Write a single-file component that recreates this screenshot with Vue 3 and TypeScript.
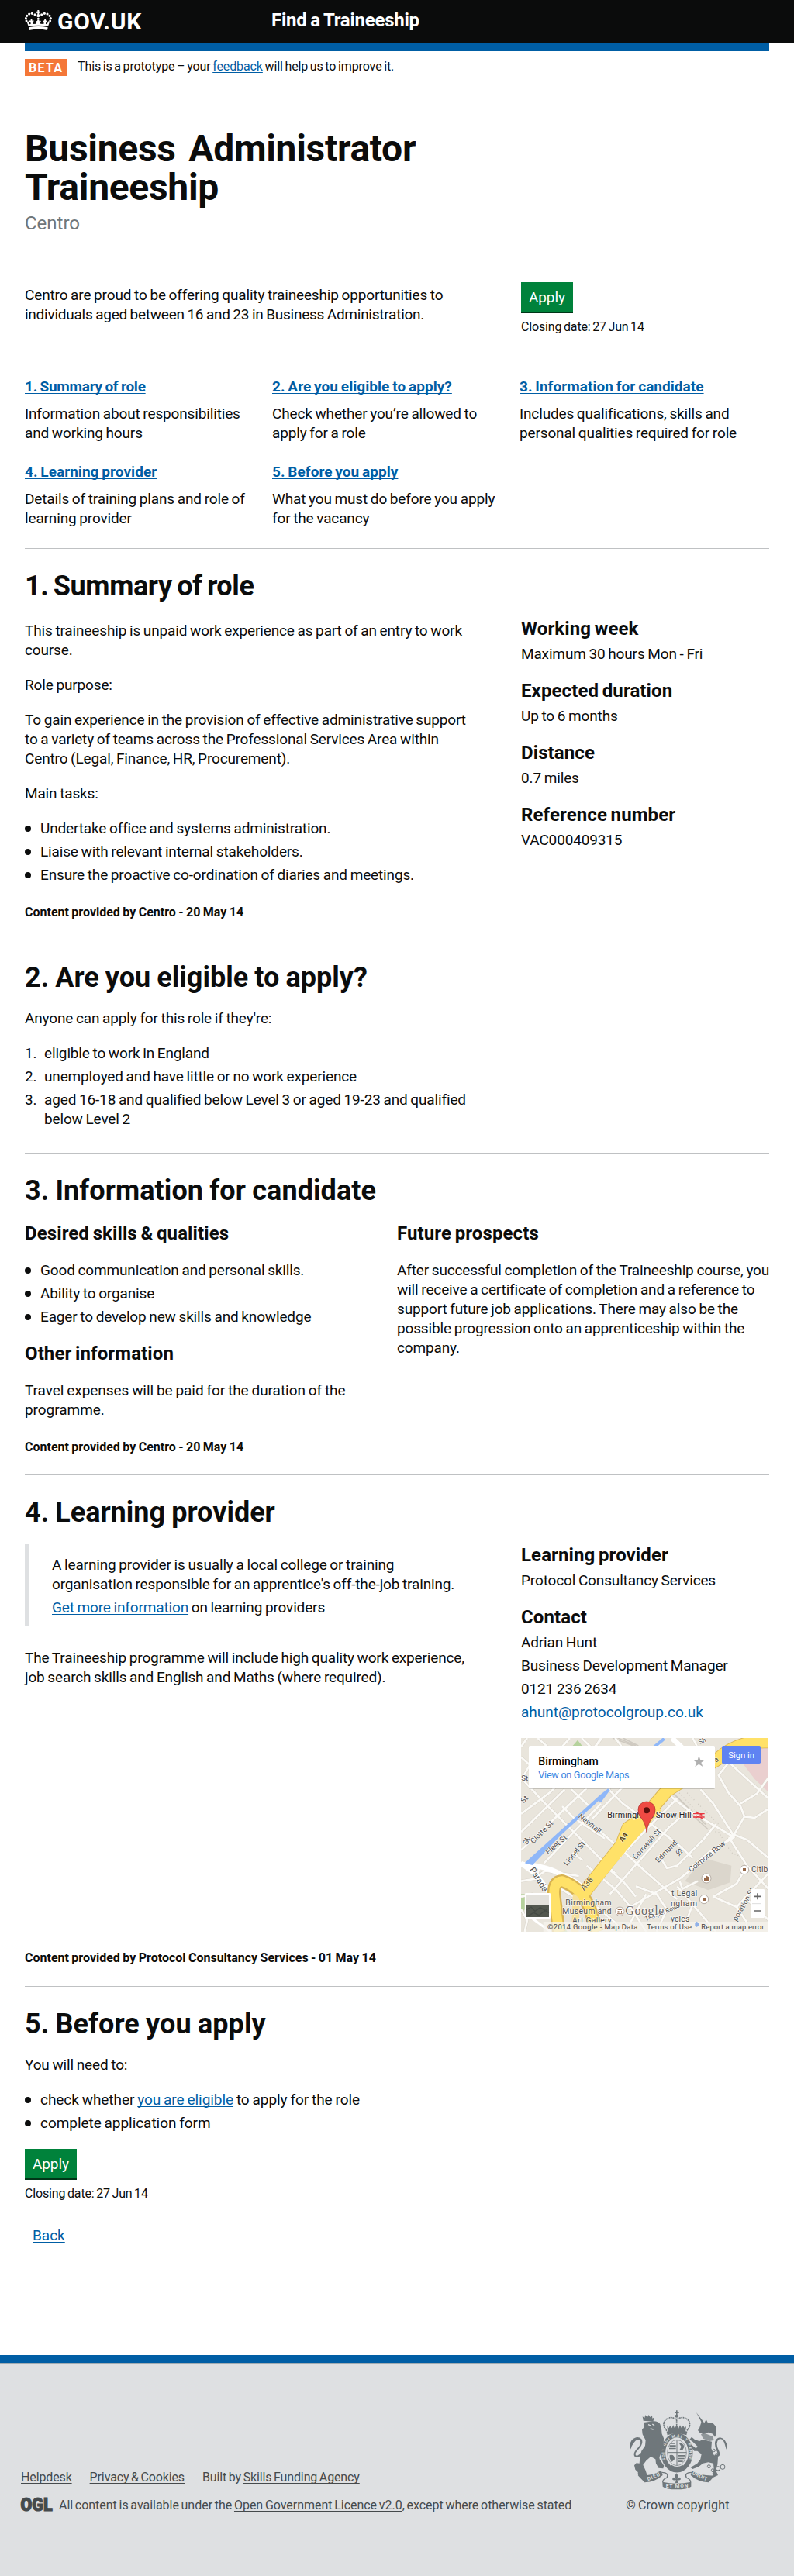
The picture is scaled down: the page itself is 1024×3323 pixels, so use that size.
<script setup lang="ts">
interface NavItem { id: string; title: string; lines: string[] }
interface Fact { term: string; details: string[] }

const nav: NavItem[] = [
  { id: 'summary', title: '1. Summary of role', lines: ['Information about responsibilities', 'and working hours'] },
  { id: 'eligible', title: '2. Are you eligible to apply?', lines: ['Check whether you’re allowed to', 'apply for a role'] },
  { id: 'candidate', title: '3. Information for candidate', lines: ['Includes qualifications, skills and', 'personal qualities required for role'] },
  { id: 'provider', title: '4. Learning provider', lines: ['Details of training plans and role of', 'learning provider'] },
  { id: 'before', title: '5. Before you apply', lines: ['What you must do before you apply', 'for the vacancy'] },
]

const facts: Fact[] = [
  { term: 'Working week', details: ['Maximum 30 hours Mon - Fri'] },
  { term: 'Expected duration', details: ['Up to 6 months'] },
  { term: 'Distance', details: ['0.7 miles'] },
  { term: 'Reference number', details: ['VAC000409315'] },
]

const tasks = [
  'Undertake office and systems administration.',
  'Liaise with relevant internal stakeholders.',
  'Ensure the proactive co-ordination of diaries and meetings.',
]

const skills = [
  'Good communication and personal skills.',
  'Ability to organise',
  'Eager to develop new skills and knowledge',
]

const streets = [
  'M36 330L150 245L330 60L350 36', 'M36 110L70 140L30 210', 'M36 400L205 235', 'M36 470L290 230',
  'M100 490L420 190', 'M125 520L345 290', 'M36 190L120 280L400 560', 'M60 36L36 70', 'M100 36L150 80',
  'M225 36L190 75', 'M270 36L310 75', 'M345 36L320 75', 'M110 525L95 580L36 590',
  'M100 570L130 550L260 570', 'M265 330L460 500L520 555L640 660', 'M195 300L240 345L360 425',
  'M360 220L430 290L500 340L640 445L700 500', 'M230 235L300 300', 'M600 250L690 320L860 420',
  'M430 225L310 350', 'M235 480L275 510', 'M330 590L540 370L640 270', 'M380 640L530 470L610 380L690 310',
  'M440 700L650 580L790 470L860 410', 'M570 490L600 540L640 530L740 430L790 370', 'M290 530L400 620L460 690L520 786',
  'M360 530L430 590L480 650', 'M480 610L560 640L600 700L560 786', 'M640 610L700 680L790 786',
  'M650 590L660 620L720 590', 'M690 540L760 480L860 420L850 400L780 290L730 235',
  'M860 410L900 340L885 300L840 250L800 180L840 130', 'M885 290L950 250L993 190', 'M840 130L993 270',
  'M900 340L940 345L993 310', 'M860 410L910 430L993 500', 'M840 420L910 530L993 620', 'M910 530L870 600L780 650',
  'M780 650L870 690L910 750L900 786', 'M870 690L993 560', 'M900 650L993 740', 'M36 650L80 640L100 690',
  'M36 700L60 740L50 786', 'M190 620L240 650L250 786', 'M330 690L400 750L430 786', 'M700 680L660 786',
  'M400 36L430 75', 'M590 36L560 75', 'M700 36L720 75', 'M520 640L470 730L440 786',
]
</script>

<template>
  <div class="page">
    <header class="top">
      <a class="logo" href="#">
        <svg class="crown" viewBox="22 25 105 78" fill="#fff">
          <path d="M71 25h6v5h5v6h-5v7h-6v-7h-5v-6h5z" />
          <circle cx="74" cy="47" r="6" /><circle cx="74" cy="58" r="4" />
          <circle cx="61" cy="42" r="4.6" /><circle cx="50" cy="38" r="4.8" /><circle cx="39" cy="40" r="4.8" />
          <circle cx="30" cy="47" r="4.8" /><circle cx="26" cy="57" r="4.8" /><circle cx="28" cy="67" r="4.4" />
          <circle cx="87" cy="42" r="4.6" /><circle cx="98" cy="38" r="4.8" /><circle cx="109" cy="40" r="4.8" />
          <circle cx="118" cy="47" r="4.8" /><circle cx="122" cy="57" r="4.8" /><circle cx="120" cy="67" r="4.4" />
          <path d="M30 70L36 88Q74 81 112 88L118 70L113 68L108 80L103 79L104 70L108 71V65L104 66L103 61H98L97 66L92 64V71L96 70L95 79L83 78L80 72L84 73V66L78 68L77 62H71L70 68L64 66V73L68 72L65 78L53 79L52 70L56 71V64L51 66L50 61H45L44 66L40 65V71L44 70L45 79L40 80L35 68z" />
          <path d="M37 92Q74 84 111 92L109 103Q74 96 39 103z" />
        </svg>
        <span class="logo-text">GOV.UK</span>
      </a>
      <span class="service">Find a Traineeship</span>
    </header>

    <div class="wrap">
      <div class="bar"></div>
      <div class="phase">
        <strong class="tag">BETA</strong>
        <span class="small">This is a prototype – your <a href="#">feedback</a> will help us to improve it.</span>
      </div>

      <h1>Business Administrator<br>Traineeship</h1>
      <p class="employer">Centro</p>

      <div class="split intro">
        <p>Centro are proud to be offering quality traineeship opportunities to<br><span class="tight">individuals aged between 16 and 23 in Business Administration.</span></p>
        <div class="cta">
          <a class="button" href="#">Apply</a>
          <p class="small">Closing date: 27 Jun 14</p>
        </div>
      </div>

      <nav class="contents">
        <div v-for="n in nav" :key="n.id">
          <a class="nav-title" :href="'#' + n.id">{{ n.title }}</a>
          <p>{{ n.lines[0] }}<br>{{ n.lines[1] }}</p>
        </div>
      </nav>

      <section id="summary">
        <h2>1. Summary of role</h2>
        <div class="split">
          <div class="copy lead">
            <p>This traineeship is unpaid work experience as part of an entry to work<br>course.</p>
            <p>Role purpose:</p>
            <p>To gain experience in the provision of effective administrative support<br>to a variety of teams across the Professional Services Area within<br>Centro (Legal, Finance, HR, Procurement).</p>
            <p>Main tasks:</p>
            <ul><li v-for="t in tasks" :key="t">{{ t }}</li></ul>
          </div>
          <div class="facts">
            <div v-for="f in facts" :key="f.term">
              <h3>{{ f.term }}</h3>
              <p v-for="d in f.details" :key="d">{{ d }}</p>
            </div>
          </div>
        </div>
        <p class="source">Content provided by Centro - 20 May 14</p>
      </section>

      <section id="eligible">
        <h2>2. Are you eligible to apply?</h2>
        <div class="copy">
          <p>Anyone can apply for this role if they're:</p>
          <ol>
            <li>eligible to work in England</li>
            <li>unemployed and have little or no work experience</li>
            <li>aged 16-18 and qualified below Level 3 or aged 19-23 and qualified<br>below Level 2</li>
          </ol>
        </div>
      </section>

      <section id="candidate">
        <h2>3. Information for candidate</h2>
        <div class="halves">
          <div class="copy">
            <h3>Desired skills &amp; qualities</h3>
            <ul><li v-for="s in skills" :key="s">{{ s }}</li></ul>
            <h3>Other information</h3>
            <p class="wide">Travel expenses will be paid for the duration of the<br>programme.</p>
          </div>
          <div class="copy">
            <h3>Future prospects</h3>
            <p>After successful completion of the Traineeship course, you<br>will receive a certificate of completion and a reference to<br>support future job applications. There may also be the<br>possible progression onto an apprenticeship within the<br>company.</p>
          </div>
        </div>
        <p class="source">Content provided by Centro - 20 May 14</p>
      </section>

      <section id="provider">
        <h2>4. Learning provider</h2>
        <div class="split">
          <div>
            <div class="inset">
              <p>A learning provider is usually a local college or training<br>organisation responsible for an apprentice's off-the-job training.</p>
              <p><a href="#">Get more information</a> on learning providers</p>
            </div>
            <p>The Traineeship programme will include high quality work experience,<br>job search skills and English and Maths (where required).</p>
          </div>
          <div class="facts">
            <div><h3>Learning provider</h3><p>Protocol Consultancy Services</p></div>
            <div>
              <h3>Contact</h3>
              <p>Adrian Hunt</p>
              <p>Business Development Manager</p>
              <p>0121 236 2634</p>
              <p class="mail"><a href="#">ahunt@protocolgroup.co.uk</a></p>
            </div>
            <svg class="map" viewBox="36 36 957 750">
              <rect x="36" y="36" width="957" height="750" fill="#e9e5dc" />
              <path d="M860 90L993 50V245L940 195z" fill="#eacfcf" />
              <path d="M236 66L255 44L272 66zM36 640L50 640V700L36 715zM170 745L185 735L215 786H180z" fill="#b5d29c" />
              <path d="M670 590L740 500L850 530L845 595L760 625z" fill="#dbd6cc" />
              <path d="M390 36L470 66M410 36L480 66M430 36L490 66M590 236L760 390M610 236L750 370" stroke="#cfcac1" stroke-width="5" fill="none" />
              <path d="M640 240L790 400M670 240L800 370M800 400L850 480L900 500" stroke="#cfcac1" stroke-width="4" stroke-dasharray="3 9" fill="none" />
              <g fill="none" stroke-linejoin="round">
                <path v-for="s in streets" :key="s" :d="s" stroke="#d9d4ca" stroke-width="11" />
                <path v-for="s in streets" :key="'w' + s" :d="s" stroke="#fbfaf7" stroke-width="8" />
                <path d="M36 525Q140 530 200 570Q250 585 300 640M36 520L90 560L150 640M620 36L660 75" stroke="#fff" stroke-width="20" />
                <path d="M170 690V786M60 720L150 786" stroke="#fff" stroke-width="9" />
              </g>
              <path d="M50 520L180 402L340 258L372 232L380 238L345 285L335 280L190 412L80 528z" fill="#8fb7f8" />
              <path d="M540 80L590 38" stroke="#8fb7f8" stroke-width="12" />
              <g fill="none" stroke-linejoin="round">
                <path d="M182 786L165 650Q158 592 195 590Q230 600 272 640L300 690L330 786M275 640L425 450L450 385L510 345L600 240L800 115Q880 45 993 50" stroke="#d8b352" stroke-width="52" />
                <path d="M250 640L245 786" stroke="#f6df9b" stroke-width="28" />
                <path d="M182 786L165 650Q158 592 195 590Q230 600 272 640L300 690L330 786" stroke="#ffe168" stroke-width="38" />
                <path d="M275 640L425 450L450 385L510 345L600 240L800 115Q880 45 993 50" stroke="#ffe168" stroke-width="47" />
                <path d="M275 640L440 438L560 300" stroke="#ffe168" stroke-width="47" />
              </g>
              <g class="map-label" font-size="29">
                <text transform="translate(84 446) rotate(-45)">Clotte St</text>
                <text transform="translate(142 488) rotate(-41)">Fleet St</text>
                <text transform="translate(214 532) rotate(-50)">Lionel St</text>
                <text transform="translate(256 342) rotate(39)">Newhall</text>
                <text transform="translate(480 508) rotate(-48)">Cornwall St</text>
                <text transform="translate(568 520) rotate(-46)">Edmund</text>
                <text transform="translate(632 475) rotate(48)">St</text>
                <text transform="translate(694 556) rotate(-39)">Colmore Row</text>
                <text transform="translate(68 545) rotate(58)" font-size="33">Parade</text>
                <text transform="translate(37 202)">St</text>
                <text transform="translate(46 290) rotate(-45)">St</text>
                <text transform="translate(62 450) rotate(-75)">St.</text>
                <text transform="translate(726 60) rotate(-20)" font-size="25">Sh</text>
                <text transform="translate(790 132) rotate(-35)" class="on-road">a</text>
                <text transform="translate(870 746) rotate(-60)">poration St</text>
                <text transform="translate(520 745) rotate(-22)" font-size="24">Temple Row</text>
                <text transform="translate(430 440) rotate(-55)" class="on-road" font-weight="700">A4</text>
                <text transform="translate(280 628) rotate(-50)" font-size="32" class="on-road">A38</text>
              </g>
              <g class="map-label" font-size="31">
                <text x="208" y="683" textLength="178">Birmingham</text>
                <text x="196" y="718" textLength="190">Museum and</text>
                <text x="234" y="752" textLength="152">Art Gallery</text>
                <text x="618" y="649" textLength="100">t Legal</text>
                <text x="615" y="688" textLength="102">ngham</text>
                <text x="615" y="748" textLength="73">ycles</text>
                <text x="927" y="556" textLength="64">Citib</text>
              </g>
              <text class="map-label dark" x="370" y="346" font-size="32" textLength="325">Birmingham Snow Hill</text>
              <path d="M702 329H746M702 342H746M712 323L734 333L712 345M738 348L714 336" stroke="#e8363f" stroke-width="4" fill="none" />
              <g fill="#fff" stroke="#9b8f86" stroke-width="2">
                <circle cx="753" cy="579" r="18" /><circle cx="900" cy="546" r="17" /><circle cx="744" cy="660" r="17" /><circle cx="418" cy="707" r="17" />
              </g>
              <path d="M744 588V575L751 579V568L762 574V588zM894 540h12v12h-12zM738 654h12v12h-12zM408 702L418 695L428 702zM410 705h3v8h-3zM416 705h3v8h-3zM423 705h3v8h-3zM408 715h20v3h-20z" fill="#95684a" />
              <text x="439" y="719" class="google" textLength="150">Google</text>

              <path d="M522 401Q518 365 500 345Q488 330 489 313A33 31 0 0 1 555 313Q556 330 544 345Q526 365 522 401z" fill="#ef4a43" stroke="#a52c27" stroke-width="2" />
              <circle cx="522" cy="316" r="12" fill="#5c0f0c" />

              <rect x="66" y="68" width="720" height="166" rx="5" fill="#000" opacity=".16" />
              <rect x="66" y="66" width="720" height="165" rx="5" fill="#fff" />
              <text x="103" y="141" font-size="42" font-weight="500" fill="#000" textLength="232">Birmingham</text>
              <text x="103" y="192" font-size="38" fill="#3a84df" textLength="352">View on Google Maps</text>
              <path d="M724 104L730 121H747L733 131L739 147L724 137L709 147L715 131L702 121H719z" fill="#b0b0b0" />
              <rect x="813" y="66" width="150" height="69" rx="5" fill="#5f83f2" />
              <text x="838" y="114" font-size="34" fill="#fff" textLength="101">Sign in</text>

              <rect x="51" y="636" width="99" height="99" rx="4" fill="#fff" />
              <rect x="57" y="642" width="87" height="42" fill="#e4e2dc" />
              <rect x="57" y="684" width="87" height="45" fill="#53584f" />
              <path d="M57 700L75 690L90 706L110 692L144 712M62 725L85 712L105 722L135 700" stroke="#454b45" stroke-width="4" fill="none" />
              <rect x="924" y="621" width="54" height="111" rx="4" fill="#fff" />
              <path d="M930 677H966" stroke="#ddd" stroke-width="3" />
              <path d="M939 649H963M951 637V661M939 705H963" stroke="#666" stroke-width="5" />

              <rect x="122" y="747" width="871" height="39" fill="#f5f3ee" opacity=".75" />
              <g font-size="28" fill="#444">
                <text x="138" y="776" textLength="349">©2014 Google - Map Data</text>
                <text x="523" y="776" textLength="173">Terms of Use</text>
                <text x="733" y="776" textLength="243">Report a map error</text>
              </g>
              <path d="M709 752l7-6 7 6v10l-7 6-7-6z" fill="#8fb0e8" />
            </svg>
          </div>
        </div>
        <p class="source">Content provided by Protocol Consultancy Services - 01 May 14</p>
      </section>

      <section id="before">
        <h2>5. Before you apply</h2>
        <div class="copy">
          <p>You will need to:</p>
          <ul class="wide">
            <li><span>check whether <a href="#">you are eligible</a> to apply for the role</span></li>
            <li>complete application form</li>
          </ul>
        </div>
        <div class="cta end">
          <a class="button" href="#">Apply</a>
          <p class="small">Closing date: 27 Jun 14</p>
        </div>
        <p class="back"><a href="#">Back</a></p>
      </section>
    </div>

    <footer>
      <div class="foot">
        <div class="foot-text small">
          <p class="foot-links"><a href="#">Helpdesk</a><a href="#">Privacy &amp; Cookies</a><span>Built by <a href="#">Skills Funding Agency</a></span></p>
          <p class="licence">
            <svg class="ogl" viewBox="0 0 41 18"><text x="-.5" y="17" textLength="41" lengthAdjust="spacingAndGlyphs">OGL</text></svg>
            <span>All content is available under the <a href="#">Open Government Licence v2.0</a>, except where otherwise stated</span>
          </p>
        </div>
        <div class="copyright small">
          <svg class="crest" viewBox="66 56 375 309" fill="#6f777b">
            <!-- crown -->
            <path d="M246 57h5v6h6v5h-6v6h-5v-6h-6v-5h6z" />
            <circle cx="248" cy="79" r="6" />
            <path d="M210 136Q190 115 203 96Q222 76 247 92Q275 76 294 96Q306 115 287 136M248 88V130" fill="none" stroke="#6f777b" stroke-width="5" stroke-dasharray="5 2" />
            <path d="M211 118l6 8 6-10 6 10 6-12 6 14 7-18 7 18 6-14 6 12 6-10 6 10 6-8-3 22Q248 128 214 140z" />
            <path d="M209 139Q248 126 289 139L286 153Q248 140 212 153z" />
            <!-- garter and shield -->
            <ellipse cx="249" cy="221" rx="53" ry="68" fill="none" stroke="#6f777b" stroke-width="17" />
            <ellipse cx="249" cy="221" rx="37" ry="50" fill="none" stroke="#6f777b" stroke-width="2" />
            <path d="M249 172V270M213 220H286" stroke="#6f777b" stroke-width="3" />
            <path d="M221 192h24v5h-24zM219 202h26v5h-26zM223 182h20v5h-20zM254 230h26v5h-26zM254 241h24v5h-24zM254 252h18v5h-18zM258 185Q272 180 278 198L270 212H258L266 198zM221 230Q240 225 240 246L230 256Q219 246 221 230z" />
            <path id="garter" d="M205 250Q186 170 249 160Q312 168 294 250" fill="none" />
            <text class="motto"><textPath href="#garter" textLength="230">SOIT QUI MAL Y PENSE</textPath></text>
            <path d="M228 268Q249 282 272 268L276 288Q249 302 224 288z" />
            <!-- lion -->
            <path d="M119 97l-3-16 8 5 3-11 8 8 5-9 5 9 8-7 1 12 8-4-5 16z" />
            <path d="M120 104L157 99Q176 98 184 110L189 128L191 148L198 165L197 200L188 222L181 238L184 258L199 270L196 282L178 280L168 262L166 246L148 236L130 252L118 268L128 290L134 309L116 317L100 310L98 296L88 286L84 270L92 261L104 262L106 240L112 214L126 194L128 172L116 150L114 132L122 122z" />
            <path d="M146 212L184 256L191 267M113 290L99 306" stroke="#6f777b" stroke-width="8" fill="none" />
            <path d="M118 222Q100 246 86 236Q76 224 96 204Q116 182 104 172Q92 166 80 186Q70 200 72 208Q60 194 74 172Q96 152 112 168Q122 184 100 208Q82 226 92 232Q102 232 116 214z" />
            <path d="M138 112l10 4M154 110l8 6M146 128l12 3" stroke="#dee0e2" stroke-width="4" />
            <!-- unicorn -->
            <path d="M324 65L352 102L346 107z" />
            <path d="M344 100L356 104L362 92L368 104L388 106L400 120L402 146L396 160L388 148L370 142L352 148L338 144L330 134L336 126z" />
            <path d="M342 150L352 144L388 158L392 172L376 176L350 166z" opacity=".72" />
            <path d="M350 170L384 178L382 204L392 230L408 240L406 266L400 290L408 308L390 316L386 302L392 284L390 262L370 258L350 262L332 276L310 284L302 278L328 262L340 246L344 226L328 214L316 214L300 194L306 190L322 204L330 198L310 178L298 170L306 160L318 170L336 176z" />
            <path d="M396 236Q422 240 412 214Q396 184 410 170Q428 160 436 194L440 208Q448 194 434 172Q416 152 400 170Q390 188 404 216Q410 232 394 230z" />
            <g fill="none" stroke="#6f777b" stroke-width="3"><circle cx="373" cy="274" r="6" /><circle cx="388" cy="289" r="6" /><circle cx="408" cy="282" r="8" /><circle cx="426" cy="276" r="9" /><circle cx="392" cy="212" r="5" /><circle cx="402" cy="228" r="5" /></g>
            <!-- ribbon -->
            <path d="M188 289L194 308Q166 334 124 336L98 309Q156 312 188 289z" />
            <path d="M308 289L302 308Q330 334 372 336L396 309Q340 312 308 289z" />
            <path d="M193 334Q248 346 304 334V352Q290 363 248 363Q206 363 194 352z" />
            <path d="M190 297Q220 298 210 318Q194 322 194 336M306 297Q276 298 286 318Q302 322 302 336" fill="none" stroke="#6f777b" stroke-width="4" />
            <path d="M247 300Q258 312 250 322Q262 310 264 324Q258 330 251 326L253 338H243L245 326Q236 330 231 324Q234 310 245 322Q238 312 247 300z" />
            <g class="motto big">
              <text transform="translate(137 330) rotate(-23)" textLength="52">DIEU</text>
              <text x="206" y="357" textLength="86">ET MON</text>
              <text transform="translate(307 304) rotate(25)" textLength="62">DROIT</text>
            </g>
          </svg>
          <span>© Crown copyright</span>
        </div>
      </div>
    </footer>
  </div>
</template>

<style>
body { background: #fff; }
</style>

<style scoped>
.page {
  width: 1024px;
  height: 3323px;
  display: flex;
  flex-direction: column;
  font: 19px/25px Roboto, "Liberation Sans", sans-serif;
  letter-spacing: -0.15px;
  word-spacing: -0.8px;
  color: #0b0c0c;
  white-space: nowrap;
}
p, h1, h2, h3, ul, ol { margin: 0; padding: 0; }
a { color: #005ea5; text-decoration: underline; text-decoration-thickness: 1px; text-underline-offset: 2px; text-decoration-skip-ink: none; }
svg { display: block; letter-spacing: 0; word-spacing: 0; }
.small { font-size: 16px; line-height: 20px; letter-spacing: -0.02px; word-spacing: -1.2px; }
.tight { letter-spacing: -0.25px; }
.wide { letter-spacing: -0.05px; }

.top { display: flex; height: 56px; flex: none; background: #0b0c0c; color: #fff; padding-left: 32px; }
.logo { display: flex; width: 318px; color: #fff; text-decoration: none; }
.crown { width: 35px; height: 26px; margin: 13px 7px 0 0; }
.logo-text { font-size: 30px; line-height: 36px; font-weight: 700; margin-top: 10px; letter-spacing: 0.7px; }
.service { font-size: 24px; line-height: 30px; font-weight: 700; margin-top: 11px; letter-spacing: -0.25px; word-spacing: -1px; }

.wrap { padding: 0 32px; }
.bar { height: 10px; background: #005ea5; }
.phase { display: flex; height: 32px; padding-top: 10px; border-bottom: 1px solid #bfc1c3; }
.phase .small { letter-spacing: -0.11px; }
.tag { width: 50px; height: 22px; padding-left: 5px; margin-right: 13px; background: #f47738; color: #fff; font-size: 16px; line-height: 23px; letter-spacing: 1.3px; }

h1 { margin-top: 58px; font-size: 48px; line-height: 50px; letter-spacing: -0.3px; word-spacing: 5px; }
.employer { margin-top: 6px; font-size: 24px; line-height: 30px; color: #6f777b; letter-spacing: 0; }

.split { display: grid; grid-template-columns: 1fr 320px; }
.intro { margin-top: 61px; }
.intro > p { margin-top: 4px; }
.cta { display: flex; flex-direction: column; align-items: flex-start; }
.button { padding: 7px 10px 6px; background: #00823b; color: #fff; text-decoration: none; box-shadow: 0 2px 0 #003618; letter-spacing: -0.1px; }
.cta .small { margin-top: 10px; letter-spacing: -0.15px; }

.contents { display: grid; grid-template-columns: repeat(3, 319px); row-gap: 25px; margin-top: 54px; padding-bottom: 26px; }
.nav-title { display: inline-block; margin-bottom: 10px; font-weight: 700; letter-spacing: 0.04px; word-spacing: -0.92px; }
.contents > :first-child .nav-title { letter-spacing: -0.25px; }

section { border-top: 1px solid #bfc1c3; padding-top: 28px; }
h2 { font-size: 36px; line-height: 40px; letter-spacing: 0; word-spacing: -0.8px; margin-bottom: 20px; }
#summary h2 { letter-spacing: -0.4px; word-spacing: -2px; }
#candidate h2, #before h2 { letter-spacing: 0.08px; }
h3 { font-size: 24px; line-height: 30px; letter-spacing: 0.1px; word-spacing: -1.4px; }
.copy { display: flex; flex-direction: column; gap: 20px; }
.lead { margin-top: 5px; }
ul, ol { list-style: none; display: flex; flex-direction: column; gap: 5px; }
li { display: flex; }
ul li::before { content: ""; flex: none; width: 8px; height: 8px; margin: 9px 12px 0 0; border-radius: 50%; background: #0b0c0c; }
ol { counter-reset: item; }
ol li { display: block; position: relative; padding-left: 25px; counter-increment: item; }
ol li::before { content: counter(item) "."; position: absolute; left: 0; width: 14px; text-align: right; }
.source { margin: 26px 0 25px; font-size: 16px; line-height: 20px; font-weight: 700; letter-spacing: 0; word-spacing: -0.54px; }
.facts { display: flex; flex-direction: column; gap: 20px; }
.facts p { margin-top: 5px; }
.facts .mail { letter-spacing: 0; }
#eligible { padding-bottom: 31px; }
.halves { display: grid; grid-template-columns: 480px 480px; }

.inset { margin: 1px 0 29px; padding: 14px 0 11px 30px; border-left: 5px solid #dee0e2; }
.inset p + p { margin-top: 5px; }
.map { width: 319px; height: 250px; margin-top: 1px; font-family: Roboto, sans-serif; }
.map-label { fill: #505050; paint-order: stroke; stroke: #fff; stroke-opacity: 0.65; stroke-width: 4px; }
.on-road { fill: #5b4a1c; }
.dark { fill: #222; }
.google { font-family: "Liberation Serif", serif; font-size: 48px; fill: #666; paint-order: stroke; stroke: #fff; stroke-width: 4px; }
#provider .source { margin-top: 24px; margin-bottom: 26px; }

.end { margin-top: 21px; }
.back { margin: 31px 0 0 10px; letter-spacing: 0; }

footer { margin-top: auto; height: 274px; border-top: 10px solid #005ea5; box-shadow: inset 0 1px 0 #a1acb2; background: #dee0e2; color: #454a4c; padding-top: 1px; flex: none; }
footer a { color: #454a4c; }
.foot { display: flex; justify-content: space-between; align-items: flex-end; height: 193px; padding: 0 84px 0 27px; }
.foot-links { display: flex; gap: 23px; margin-bottom: 16px; letter-spacing: -0.13px; }
.licence { display: flex; letter-spacing: -0.03px; }
.ogl { width: 41px; height: 18px; margin: 0 8px 0 0; overflow: visible; }
.ogl text { font-size: 23px; font-weight: 900; fill: #454a4c; stroke: #454a4c; stroke-width: 1.2px; }
.copyright { display: flex; flex-direction: column; align-items: center; width: 132px; letter-spacing: 0.2px; }
.crest { width: 125px; height: 103px; margin-bottom: 10px; }
.motto { font: 700 15px Roboto, sans-serif; fill: #dee0e2; }
.big { font-size: 20px; }
</style>
